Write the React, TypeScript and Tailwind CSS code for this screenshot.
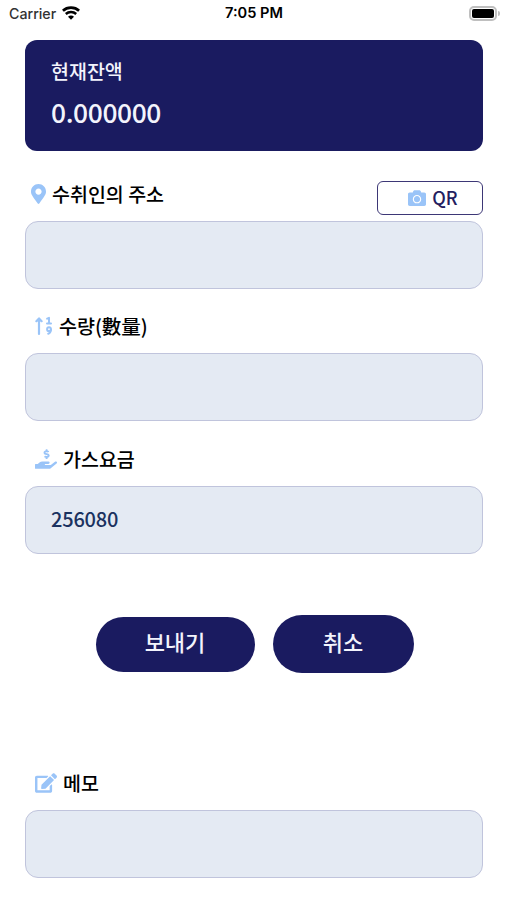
import type { ReactNode } from "react";
import {
  FaCamera,
  FaEdit,
  FaHandHoldingUsd,
  FaMapMarkerAlt,
} from "react-icons/fa";

function WifiIcon() {
  return (
    <svg className="w-[18px] h-[14px]" viewBox="0 0 18 14" fill="none">
      <path
        d="M.9 4.7C5.3.5 12.7.5 17.1 4.7"
        stroke="black"
        strokeWidth="2.7"
      />
      <path
        d="M3.8 8c2.9-2.7 7.5-2.7 10.4 0"
        stroke="black"
        strokeWidth="2.4"
      />
      <path d="M9 13.7 6 10.7c1.6-1.5 4.4-1.5 6 0z" fill="black" />
    </svg>
  );
}

// Up arrow with 1 over 9 beside it
function SortUpIcon() {
  return (
    <svg
      className="h-[20px] w-[19px]"
      viewBox="0 0 19 20"
      fill="none"
      stroke="currentColor"
      strokeLinecap="round"
      strokeLinejoin="round"
    >
      <path d="M4 18V2.5M1.4 5.2 4 2.4l2.6 2.8" strokeWidth="2.2" />
      <path d="M12.1 2.6 14 1.9V7.4M12 7.6h4" strokeWidth="2" />
      <circle cx="14" cy="13.2" r="1.9" strokeWidth="2" />
      <path d="M15.9 13.4c0 2.4-.9 3.7-2.7 4.3" strokeWidth="2" />
    </svg>
  );
}

function StatusBar() {
  return (
    <div className="relative flex h-[27px] items-center justify-between pl-[9px] pr-[7px] font-['Inter',sans-serif] text-black">
      <div className="flex items-center gap-[6px]">
        <span className="text-[14.2px] text-[#333]">Carrier</span>
        <WifiIcon />
      </div>
      <span className="absolute inset-x-0 pl-px pt-px text-center text-[14.6px] font-semibold">
        7:05 PM
      </span>
      <div className="flex items-center gap-px">
        <div className="h-[15px] w-[28px] rounded-[5px] border-2 border-[#bfbfbf] p-px">
          <div className="h-full rounded-[2px] bg-black" />
        </div>
        <div className="h-[5px] w-[2px] rounded-r-full bg-[#bfbfbf]" />
      </div>
    </div>
  );
}

type FieldProps = {
  icon: ReactNode;
  label: string;
  value?: string;
  action?: ReactNode;
  labelClass: string;
  className: string;
};

function Field({ icon, label, value, action, labelClass, className }: FieldProps) {
  return (
    <section className={className}>
      <div className="flex h-[40px] items-start justify-between">
        <div className={`flex h-[25px] items-center ${labelClass}`}>
          <span className="text-[#9ac4f8]">{icon}</span>
          <span className="whitespace-nowrap text-[19.5px] leading-[25px] text-black">
            {label}
          </span>
        </div>
        {action}
      </div>
      <div className="flex h-[68px] items-center rounded-[13px] border border-[#c0c4dc] bg-[#e4eaf3] px-[25px] pb-[3px] text-[20px] tracking-[-0.2px] text-[#1b3260]">
        {value}
      </div>
    </section>
  );
}

export default function App() {
  return (
    <div className="h-[900px] w-[507px] overflow-hidden bg-white font-['Noto_Sans_CJK_KR',sans-serif] font-medium">
      <StatusBar />

      <main className="pl-[25px] pr-[24px] pt-[13px]">
        {/* Balance */}
        <div className="h-[111px] rounded-[12px] bg-[#1a1b60] px-[26px] pt-[18px] text-[#f3f4fc]">
          <div className="text-[19.5px] leading-[26px]">현재잔액</div>
          <div className="mt-[10px] text-[26.4px] leading-[36px] tracking-[-0.4px]">
            0.000000
          </div>
        </div>

        <Field
          className="mt-[30px]"
          labelClass="gap-[4px] pl-[4px]"
          icon={<FaMapMarkerAlt className="h-[20px] w-[19px]" />}
          label="수취인의 주소"
          action={
            <button className="flex h-[34px] w-[106px] items-center justify-center gap-[6px] rounded-[6px] border border-[#3d3776] pb-px pl-[6px] text-[18px] text-[#241d60]">
              <FaCamera className="size-[18px] text-[#9ac4f8]" />
              <span className="-mt-px">QR</span>
            </button>
          }
        />

        <Field
          className="mt-[24px]"
          labelClass="gap-[5px] pl-[10px]"
          icon={<SortUpIcon />}
          label="수량(數量)"
        />

        <Field
          className="mt-[25px]"
          labelClass="gap-[6px] pl-[10px]"
          icon={<FaHandHoldingUsd className="h-[20px] w-[22px]" />}
          label="가스요금"
          value="256080"
        />

        {/* Actions */}
        <div className="mt-[61px] flex h-[58px] items-center justify-center gap-[18px] pl-px text-[22px] text-[#f3f4fc]">
          <button className="h-[55px] w-[159px] rounded-full bg-[#1a1b60] pb-[5px]">
            보내기
          </button>
          <button className="h-[58px] w-[141px] rounded-full bg-[#1a1b60] pb-[5px]">
            취소
          </button>
        </div>

        <Field
          className="mt-[97px]"
          labelClass="gap-[6px] pl-[10px]"
          icon={<FaEdit className="h-[20px] w-[22px]" />}
          label="메모"
        />
      </main>
    </div>
  );
}
